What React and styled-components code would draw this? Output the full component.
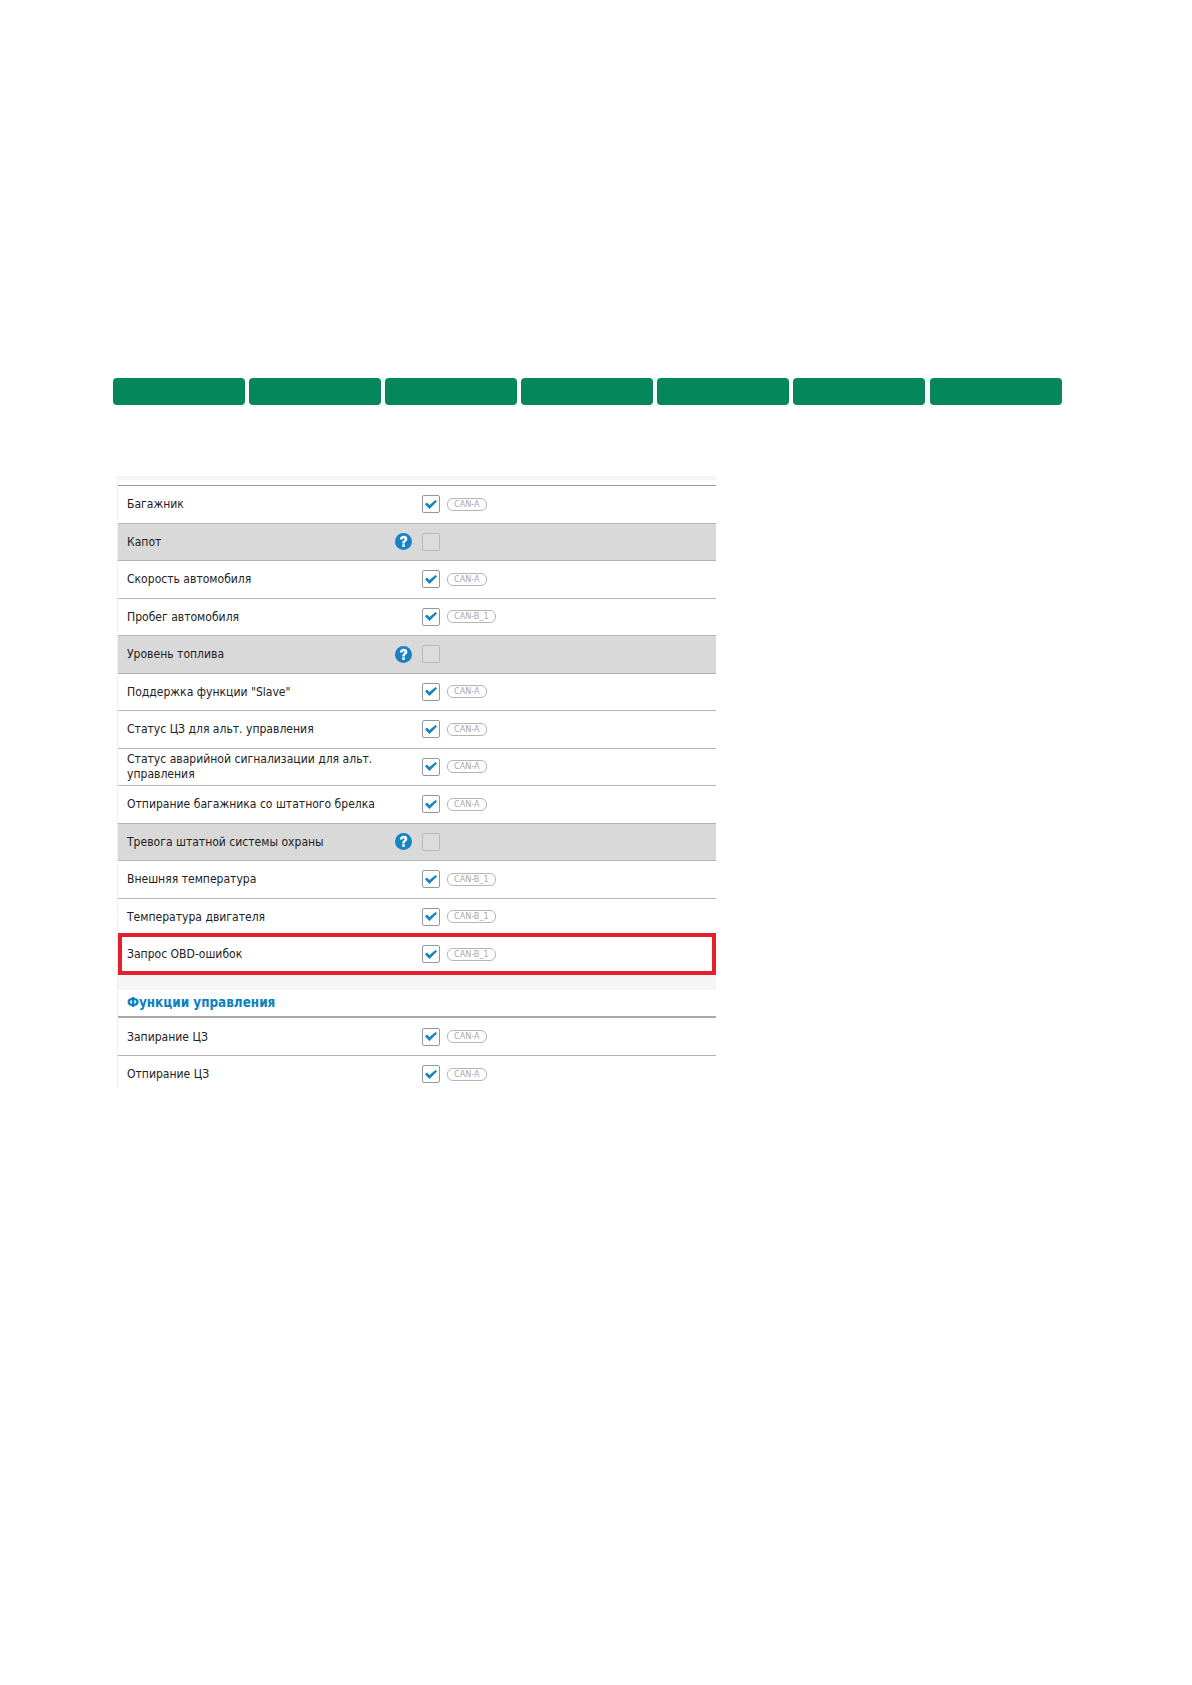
import React from 'react';
import styled, { createGlobalStyle } from 'styled-components';

const GlobalStyle = createGlobalStyle`
	html, body {
		margin: 0;
		padding: 0;
		background: #fff;
	}
	body {
		font-family: "DejaVu Sans Condensed", "DejaVu Sans", "Noto Sans", sans-serif;
		color: #222;
	}
`;

const Page = styled.div`
	width: 1192px;
	height: 1685px;
	padding: 378px 0 0 113px;
	box-sizing: border-box;
	overflow: hidden;
`;

const TabBar = styled.div`
	display: grid;
	grid-template-columns: repeat(7, 132px);
	column-gap: 4.1px;
`;

const Tab = styled.div`
	height: 27px;
	background: #04875a;
	border-radius: 4px;
`;

const Panel = styled.div`
	width: 598px;
	height: 611px;
	margin: 71px 0 0 4px;
	border-left: 1px solid #f0f0f0;
	overflow: hidden;
`;

const Strip = styled.div`
	height: 4px;
	margin-bottom: 5px;
	background: #f5f5f5;
`;

const Row = styled.div`
	display: grid;
	grid-template-columns: 268px 27px 18px auto;
	align-items: center;
	height: ${props => props.$height || 37.5}px;
	box-sizing: border-box;
	padding-left: 9px;
	background: ${props => (props.$off ? '#d9d9d9' : '#fff')};
	border-top: ${props => (props.$plain ? 'none' : `1px solid ${props.$strong ? '#9a9a9a' : '#b4b4b4'}`)};
`;

const HighlightRow = styled(Row)`
	position: relative;
	margin-top: -2px;
	border: 4px solid #e3202c;
	padding-left: 5px;
	height: 42px;
`;

const Label = styled.div`
	grid-column: 1;
	font-size: 12.05px;
	line-height: 15px;
	padding: 1px 8px 0 0;
`;

const HelpIcon = styled.svg`
	grid-column: 2;
	width: 17px;
	height: 17px;
	display: block;
`;

const Checkbox = styled.div`
	grid-column: 3;
	width: 18px;
	height: 18px;
	box-sizing: border-box;
	border: 1px solid ${props => (props.$disabled ? '#b9b9b9' : '#8e9aa3')};
	border-radius: 2px;
	background: ${props => (props.$disabled ? '#dcdcdc' : '#fff')};
	display: flex;
	align-items: center;
	justify-content: center;
`;

const Pill = styled.span`
	grid-column: 4;
	justify-self: start;
	margin-left: 7px;
	height: 11px;
	padding: 0 6px;
	border: 1px solid #b5b5b5;
	border-radius: 6px;
	font-size: 9px;
	line-height: 10px;
	color: #a8a8a8;
`;

const SectionGap = styled.div`
	height: 15px;
	background: #f5f5f5;
`;

const SectionTitle = styled.div`
	height: 28px;
	padding-left: 9px;
	box-sizing: border-box;
	font-size: 13.4px;
	font-weight: 700;
	line-height: 25px;
	color: #0a80c0;
	border-bottom: 2px solid #a8a8a8;
`;

const Check = () => (
	<svg width="14" height="11" viewBox="0 0 14 11">
		<path d="M1 5.2 L3 3.6 L5.4 6 L11.6 1 L13 2.6 L5.4 10 Z" fill="#1a82bd" />
	</svg>
);

const Help = () => (
	<HelpIcon viewBox="0 0 16 16">
		<circle cx="8" cy="8" r="8" fill="#1583c4" />
		<path d="M4.6 6 C4.7 3.9 6.1 2.7 8.2 2.7 C10.2 2.7 11.6 3.9 11.6 5.6 C11.6 7 10.7 7.7 9.8 8.3 C9.3 8.7 9.2 9 9.2 9.8 L6.8 9.8 C6.8 8.5 7.1 7.8 7.9 7.2 C8.7 6.6 9 6.3 9 5.8 C9 5.3 8.7 5 8.1 5 C7.5 5 7.1 5.4 7 6.2 Z" fill="#fff" />
		<rect x="6.8" y="10.6" width="2.4" height="2.4" fill="#fff" />
	</HelpIcon>
);

const tabs = [0, 1, 2, 3, 4, 5, 6];

const rows = [
	{ label: 'Багажник', can: 'CAN-A', strong: true },
	{ label: 'Капот', off: true },
	{ label: 'Скорость автомобиля', can: 'CAN-A' },
	{ label: 'Пробег автомобиля', can: 'CAN-B_1' },
	{ label: 'Уровень топлива', off: true },
	{ label: 'Поддержка функции "Slave"', can: 'CAN-A' },
	{ label: 'Статус ЦЗ для альт. управления', can: 'CAN-A' },
	{ label: 'Статус аварийной сигнализации для альт. управления', can: 'CAN-A' },
	{ label: 'Отпирание багажника со штатного брелка', can: 'CAN-A' },
	{ label: 'Тревога штатной системы охраны', off: true },
	{ label: 'Внешняя температура', can: 'CAN-B_1' },
	{ label: 'Температура двигателя', can: 'CAN-B_1' }
];

const RowContent = ({ label, can, off }) => (
	<>
		<Label>{label}</Label>
		{off && <Help />}
		<Checkbox $disabled={off}>{!off && <Check />}</Checkbox>
		{can && <Pill>{can}</Pill>}
	</>
);

const App = () => (
	<Page>
		<GlobalStyle />
		<TabBar>
			{tabs.map((tab) => <Tab key={tab} />)}
		</TabBar>
		<Panel>
			<Strip />
			{rows.map((row) => (
				<Row key={row.label} $off={row.off} $strong={row.strong}>
					<RowContent {...row} />
				</Row>
			))}
			<HighlightRow>
				<RowContent label="Запрос OBD-ошибок" can="CAN-B_1" />
			</HighlightRow>
			<SectionGap />
			<SectionTitle>Функции управления</SectionTitle>
			<Row $height={37} $plain>
				<RowContent label="Запирание ЦЗ" can="CAN-A" />
			</Row>
			<Row>
				<RowContent label="Отпирание ЦЗ" can="CAN-A" />
			</Row>
		</Panel>
	</Page>
);

export default App;
